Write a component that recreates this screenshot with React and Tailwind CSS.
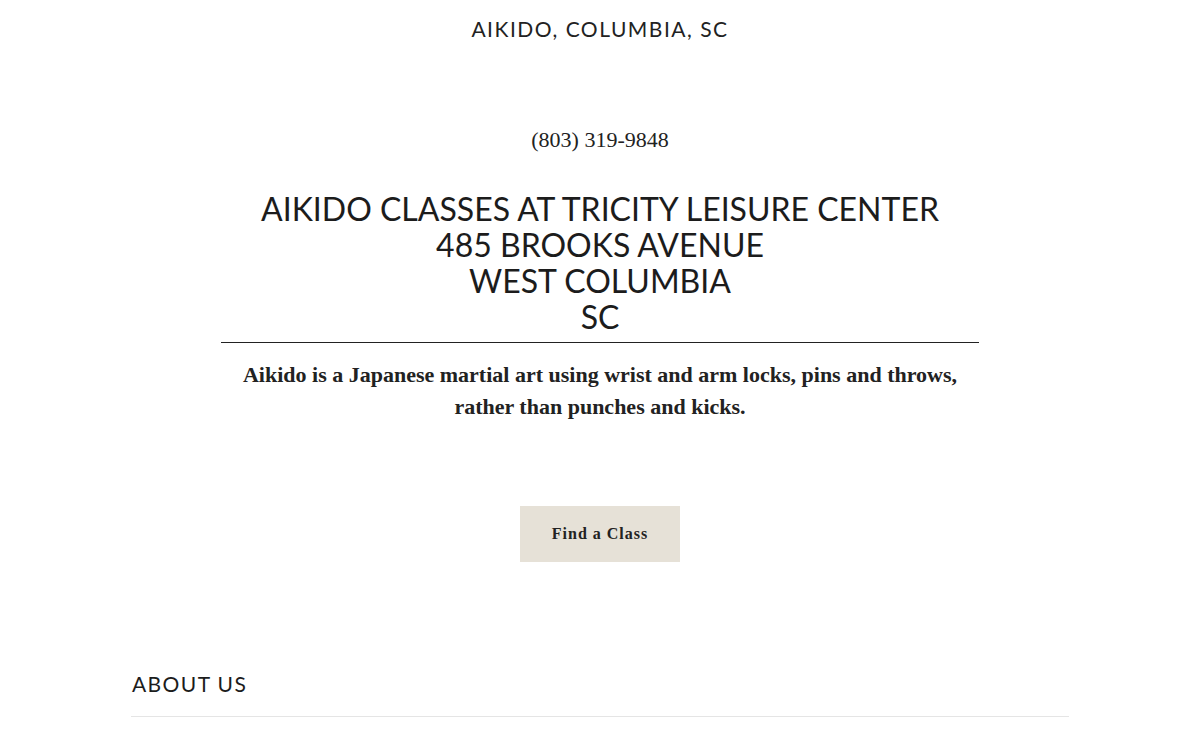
export default function App() {
  const lato = { fontFamily: "Lato, 'Open Sans', sans-serif" };
  const serif = { fontFamily: "'Liberation Serif', 'DejaVu Serif', serif" };
  return (
    <div className="min-h-[740px] bg-white text-[#1c1c1c]">
      <header className="flex justify-center pt-[16px]">
        <h1 style={lato} className="text-[21px] leading-[26px] tracking-[1.5px] text-[#222]">AIKIDO, COLUMBIA, SC</h1>
      </header>
      <section className="flex flex-col items-center">
        <p style={serif} className="mt-[85px] text-[22px] leading-[26px] text-[#222]">(803) 319-9848</p>
        <div className="mt-[38px] w-[758px] border-b border-[#222] pb-[7px] text-center">
          <h2 style={lato} className="text-[32px] leading-[36px] tracking-[0px] text-[#1c1c1c]">
            AIKIDO CLASSES AT TRICITY LEISURE CENTER<br />
            485 BROOKS AVENUE<br />
            WEST COLUMBIA<br />
            SC
          </h2>
        </div>
        <p style={serif} className="mt-[16px] w-[758px] text-center text-[22px] font-bold leading-[32px] text-[#222]">
          Aikido is a Japanese martial art using wrist and arm locks, pins and throws,<br />
          rather than punches and kicks.
        </p>
        <button style={serif} className="mt-[83px] flex h-[56px] w-[160px] items-center justify-center bg-[#e6e1d7] text-[16px] font-bold tracking-[1px] text-[#222]">
          Find a Class
        </button>
      </section>
      <section className="mx-auto mt-[109px] w-[938px]">
        <h3 style={lato} className="pl-[1px] text-[21px] leading-[26px] tracking-[1.4px] text-[#1c1c1c]">ABOUT US</h3>
        <div className="mt-[19px] border-b border-[#e5e5e5]" />
      </section>
    </div>
  );
}
